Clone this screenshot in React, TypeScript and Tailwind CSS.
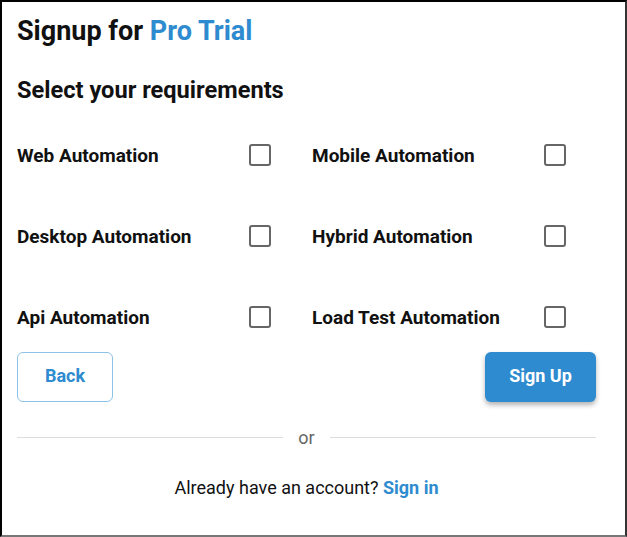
import React, { useState } from 'react';

const options = [
  'Web Automation',
  'Mobile Automation',
  'Desktop Automation',
  'Hybrid Automation',
  'Api Automation',
  'Load Test Automation',
];

const Box = ({ checked, onClick }: { checked: boolean; onClick: () => void }) => (
  <button
    onClick={onClick}
    className={`w-[22px] h-[22px] rounded-[3px] border-[2.5px] ${checked ? 'bg-[#2e8bcf] border-[#2e8bcf]' : 'border-[#666]'}`}
  />
);

export default function App() {
  const [picked, setPicked] = useState<string[]>([]);

  const toggle = (name: string) => {
    setPicked(p => (p.includes(name) ? p.filter(x => x !== name) : [...p, name]));
  };

  return (
    <div
      className="w-[627px] h-[537px] bg-white border-2 border-black border-b-[#777] border-r-[#333] pl-[15px] pr-[29px] overflow-hidden"
      style={{ fontFamily: 'Roboto, "Liberation Sans", sans-serif' }}
    >
      <h1 className="pt-[14px] text-[27px] leading-[30px] font-bold text-[#111]">
        Signup for <span className="text-[#2e8bcf]">Pro Trial</span>
      </h1>
      <h2 className="mt-[30px] text-[23.6px] leading-[28px] font-bold text-[#111]">Select your requirements</h2>

      <div className="mt-[30px] grid grid-cols-[295px_1fr] gap-y-[39px]">
        {options.map(name => (
          <div key={name} className="flex items-center justify-between w-[254px] h-[42px]">
            <span className="pt-[2px] text-[19px] font-bold text-[#111]">{name}</span>
            <Box checked={picked.includes(name)} onClick={() => toggle(name)} />
          </div>
        ))}
      </div>

      <div className="mt-[14px] flex justify-between">
        <button className="w-[96px] h-[50px] pb-[3px] rounded-[6px] border border-[#8cc2e8] text-[#2e8bcf] text-[18px] font-bold">
          Back
        </button>
        <button className="w-[111px] h-[50px] pb-[3px] rounded-[6px] bg-[#2e8bcf] text-white text-[18px] font-bold shadow-[0_3px_5px_rgba(0,0,0,0.3)]">
          Sign Up
        </button>
      </div>

      <div className="mt-[25px] h-[20px] flex items-center gap-[15px]">
        <div className="flex-1 h-px bg-[#ddd]" />
        <span className="text-[18px] text-[#666]">or</span>
        <div className="flex-1 h-px bg-[#ddd]" />
      </div>

      <p className="mt-[29px] text-center text-[18px] leading-[24px] text-[#111]">
        Already have an account? <a className="text-[#2e8bcf] font-bold cursor-pointer">Sign in</a>
      </p>
    </div>
  );
}
